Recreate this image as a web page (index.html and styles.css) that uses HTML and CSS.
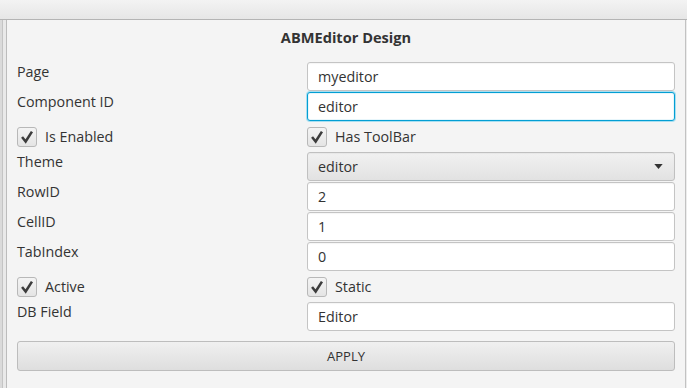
FILE: index.html
```html
<!DOCTYPE html>
<html lang="en">
<head>
  <meta charset="UTF-8">
  <title>ABMEditor Design</title>
  <link rel="stylesheet" href="styles.css">
</head>
<body>

  <!-- Window title strip -->
  <div class="topbar"></div>

  <div class="frame">
    <div class="rail"></div>

    <!-- Property panel -->
    <div class="panel">
      <h2 class="title">ABMEditor Design</h2>

      <div class="form">
        <label class="lbl">Page</label>
        <div class="field">myeditor</div>

        <label class="lbl">Component ID</label>
        <div class="field focused">editor</div>

        <div class="check">
          <span class="box"><svg viewBox="0 0 20 20"><polyline points="4.5,10 8.5,15 15.5,4"/></svg></span>
          <span>Is Enabled</span>
        </div>
        <div class="check">
          <span class="box"><svg viewBox="0 0 20 20"><polyline points="4.5,10 8.5,15 15.5,4"/></svg></span>
          <span>Has ToolBar</span>
        </div>

        <label class="lbl">Theme</label>
        <div class="combo">
          <span>editor</span>
          <svg class="arrow" viewBox="0 0 10 6"><polygon points="0,0 10,0 5,6"/></svg>
        </div>

        <label class="lbl">RowID</label>
        <div class="field">2</div>

        <label class="lbl">CellID</label>
        <div class="field">1</div>

        <label class="lbl">TabIndex</label>
        <div class="field">0</div>

        <div class="check">
          <span class="box"><svg viewBox="0 0 20 20"><polyline points="4.5,10 8.5,15 15.5,4"/></svg></span>
          <span>Active</span>
        </div>
        <div class="check">
          <span class="box"><svg viewBox="0 0 20 20"><polyline points="4.5,10 8.5,15 15.5,4"/></svg></span>
          <span>Static</span>
        </div>

        <label class="lbl">DB Field</label>
        <div class="field">Editor</div>
      </div>

      <button class="apply" type="button">APPLY</button>
    </div>

    <div class="rail-right"></div>
  </div>

</body>
</html>
```

FILE: styles.css
```css
html, body {
  height: 100%;
}

body {
  margin: 0;
  font-family: "Open Sans", "Liberation Sans", sans-serif;
  font-size: 14.3px;
  color: #333;
  background-color: #f4f4f4;
  display: flex;
  flex-direction: column;
  overflow: hidden;
}

.topbar {
  height: 19px;
  flex: none;
  background: linear-gradient(#f3f3f3, #e6e6e6);
  border-bottom: 1px solid #b4b4b4;
}

.frame {
  flex: 1;
  display: flex;
}

.rail {
  width: 7px;
  flex: none;
  background: linear-gradient(to right,
    #dadada 0, #dadada 2px,
    #c4c4c4 2px, #c4c4c4 3px,
    #e9e9e9 3px, #e9e9e9 6px,
    #bcbcbc 6px, #bcbcbc 7px);
}

.rail-right {
  width: 2px;
  flex: none;
  background: linear-gradient(to right, #c2c2c2 0, #c2c2c2 1px, #ececec 1px);
}

.panel {
  flex: 1;
  padding: 0 10px;
  background-color: #f4f4f4;
}

.title {
  margin: 0;
  padding-top: 7px;
  height: 42px;
  box-sizing: border-box;
  line-height: 20px;
  font-size: 14.6px;
  font-weight: bold;
  text-align: center;
  color: #333;
}

.form {
  display: grid;
  grid-template-columns: 290px 1fr;
  grid-auto-rows: 29px;
  row-gap: 1px;
}

.lbl {
  line-height: 20px;
}

.field, .combo {
  box-sizing: border-box;
  height: 29px;
  padding: 0 10px;
  line-height: 27px;
  border: 1px solid #c4c4c4;
  border-radius: 3px;
  background-color: #fff;
  box-shadow: inset 0 1px 1px rgba(0,0,0,0.04);
}

.field.focused {
  border-color: #039ed3;
  box-shadow: 0 0 0 1px #a8dff1, inset 0 0 0 1px #e8f6fb;
}

.combo {
  display: flex;
  justify-content: space-between;
  align-items: center;
  background: linear-gradient(#f1f1f1, #e2e2e2);
  border-color: #c0c0c0;
}

.arrow {
  width: 9px;
  height: 5px;
  fill: #333;
  margin-right: 1px;
}

.check {
  display: flex;
  align-items: center;
  gap: 8px;
}

.box {
  width: 20px;
  height: 20px;
  box-sizing: border-box;
  border: 1px solid #b8b8b8;
  border-radius: 3px;
  background: linear-gradient(#f4f4f4, #e4e4e4);
  display: flex;
}

.box svg {
  width: 100%;
  height: 100%;
  fill: none;
  stroke: #3c3c3c;
  stroke-width: 2.8;
}

.apply {
  display: block;
  width: 100%;
  height: 30px;
  margin-top: 10px;
  border: 1px solid #bdbdbd;
  border-radius: 3px;
  background: linear-gradient(#f0f0f0, #dedede);
  font-family: inherit;
  font-size: 13px;
  color: #333;
  cursor: pointer;
}
```
